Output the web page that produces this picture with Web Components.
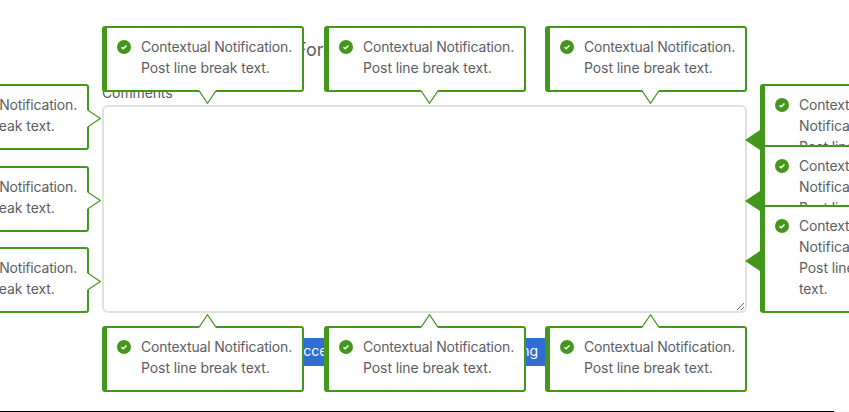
<!DOCTYPE html>
<html lang="en"><head><meta charset="utf-8"><title>Contextual notifications</title>
<style>
html,body{margin:0;height:412px;overflow:hidden;background:#fff}
body{font:14px/21px Inter,"Liberation Sans",sans-serif;color:#5d5e63}
</style></head><body>
<demo-form></demo-form>
<script>
const CHECK = `<svg width="14" height="14" viewBox="0 0 14 14"><circle cx="7" cy="7" r="7" fill="#43971d"/><path d="M4.5 7.2 6.2 8.8 9.5 5.4" fill="none" stroke="#fff" stroke-width="1.5"/></svg>`;
const ARROWS = {
  down:  ['17','14','M0 0H17L8.5 13.5Z','M.3 1 8.5 13.3 16.7 1'],
  up:    ['17','14','M0 14H17L8.5 .5Z','M.3 13 8.5 .7 16.7 13'],
  right: ['14','17','M0 0V17L13.5 8.5Z','M1 .3 13.3 8.5 1 16.7'],
  left:  ['15','20','M15 0V20L0 10Z','']
};
customElements.define('context-note', class extends HTMLElement {
  connectedCallback() {
    const dir = this.getAttribute('arrow'), [w,h,fill,line] = ARROWS[dir];
    this.attachShadow({mode:'open'}).innerHTML = `<style>
      :host{position:absolute;box-sizing:border-box;width:202px;min-height:66px;display:flex;gap:10px;
        padding:8px 8px 12px 10px;border:2px solid #43971d;border-left-width:5px;border-radius:3px;background:#fff}
      :host([arrow=left]){width:146px}
      .icon{flex:none;width:14px;padding-top:4px}
      .icon svg{display:block}
      .text{white-space:pre;letter-spacing:var(--track)}
      .text::first-line{letter-spacing:-.18px}
      .arrow{position:absolute;display:block}
      .down{left:92px;top:62px}.up{left:92px;top:-14px}
      .right{right:-14px;top:24px}.left{left:-20px;top:43.5px}
    </style><span class="icon">${CHECK}</span><span class="text"><slot></slot></span>
    <svg class="arrow ${dir}" width="${w}" height="${h}" viewBox="0 0 ${w} ${h}"><path d="${fill}" fill="${dir==='left'?'#43971d':'#fff'}"/><path d="${line}" fill="none" stroke="#43971d" stroke-width="1.2"/></svg>`;
  }
});
customElements.define('action-button', class extends HTMLElement {
  connectedCallback() {
    this.attachShadow({mode:'open'}).innerHTML = `<style>:host{display:block;box-sizing:border-box;height:28px;padding:2px 12px;background:#316dd2;color:#fff;white-space:nowrap}</style><slot></slot>`;
  }
});
customElements.define('demo-form', class extends HTMLElement {
  connectedCallback() {
    const at = (x,y,arrow) => `<context-note arrow="${arrow}" style="left:${x}px;top:${y}px">${arrow==='left'?'Contextual\nNotification.\nPost line break\ntext.':'Contextual Notification.\nPost line break text.'}</context-note>`;
    const notes = [];
    for (const x of [102,324,545]) notes.push(at(x,26,'down'), at(x,326,'up'));
    for (const y of [84,166,247]) notes.push(at(-113,y,'right'));
    for (const y of [84,145,205]) notes.push(at(760,y,'left'));
    this.attachShadow({mode:'open'}).innerHTML = `<style>
      :host{display:block;position:relative;height:412px;overflow:hidden;--track:-.09px}
      .form{display:flex;flex-direction:column;width:645px;margin-left:102px;padding-top:36px}
      h1{margin:0 0 19px;padding-left:194px;font-size:18px;line-height:27px;font-weight:400}
      label{line-height:21px;height:23px;letter-spacing:-.12px}
      textarea{display:block;box-sizing:border-box;width:645px;height:208px;margin:0;border:2px solid #e0e0e0;border-radius:6px;outline:0;background:#fff}
      .actions{display:flex;justify-content:space-between;width:276px;padding:25px 0 0 172px}
      .footer{height:1px;margin-top:45px;background:linear-gradient(90deg,#000 834px,#f8f8f8 834px)}
    </style><div class="form"><h1>Form</h1><label>Comments</label><textarea></textarea>
    <div class="actions"><action-button>Success</action-button><action-button>Warning</action-button></div></div>
    <div class="footer"></div>${notes.join('')}`;
  }
});
</script></body></html>
